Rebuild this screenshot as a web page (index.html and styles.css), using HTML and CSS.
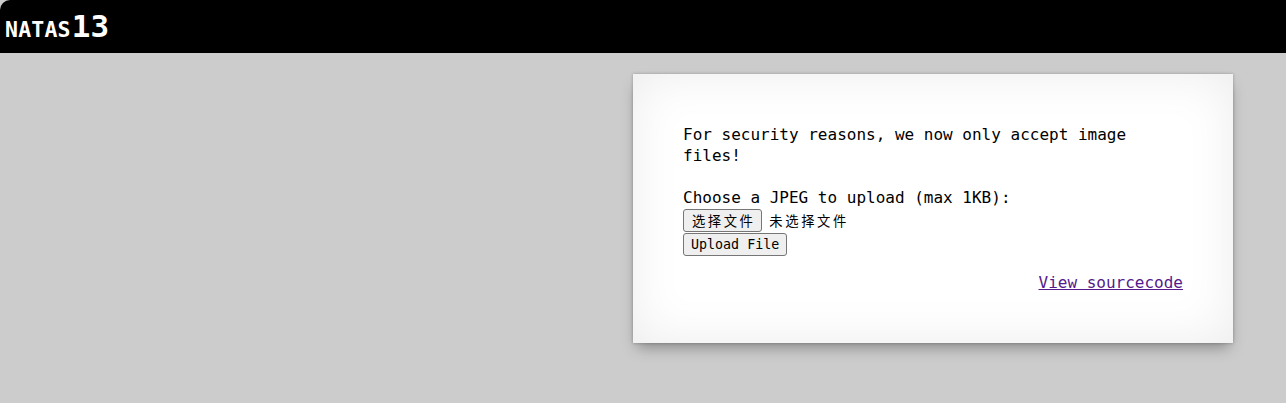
FILE: index.html
```
<!DOCTYPE html>
<html>
<head>
<meta charset="utf-8">
<title>natas13</title>
<link rel="stylesheet" href="styles.css">
</head>
<body>
<h1 class="title"><span class="title-name">NATAS</span><span class="title-level">13</span></h1>
<div class="page">
  <div class="content">
    <form class="upload-form">
      <p class="line">For security reasons, we now only accept image files!</p>
      <p class="line blank">&nbsp;</p>
      <p class="line">Choose a JPEG to upload (max 1KB):</p>
      <div class="file-row">
        <button type="button" class="btn btn-cjk">选择文件</button><span class="file-label">未选择文件</span>
      </div>
      <div class="submit-row">
        <button type="button" class="btn">Upload File</button>
      </div>
    </form>
    <div class="viewsource"><a class="source-link" href="#">View sourcecode</a></div>
  </div>
</div>
</body>
</html>
```

FILE: styles.css
```
html, body {
  margin: 0;
  padding: 0;
}
body {
  background: #cccccc;
  font-family: "DejaVu Sans Mono", "Liberation Mono", "Noto Sans CJK SC", monospace;
  font-size: 16px;
  color: #000;
  width: 1286px;
  height: 403px;
  overflow: hidden;
}
.title {
  margin: 0;
  height: 53px;
  background: #000;
  color: #fff;
  border-top-left-radius: 10px;
  padding: 11px 0 0 5px;
  box-sizing: border-box;
  display: flex;
  align-items: baseline;
  font-weight: bold;
  line-height: 1;
}
.title-name {
  font-size: 21.5px;
  letter-spacing: 0.2px;
}
.title-level {
  font-size: 31px;
  margin-left: 1px;
}
.page {
  display: flex;
  justify-content: flex-end;
  padding: 21px 53px 0 0;
}
.content {
  width: 500px;
  padding: 50px;
  background: #fff;
  box-shadow: inset 0 0 50px rgba(0,0,0,0.08), 0 0 3px rgba(0,0,0,0.25), 0 8px 14px -4px rgba(0,0,0,0.35);
}
.upload-form {
  margin: 0;
}
.line {
  margin: 0;
  line-height: 21px;
}
.file-row {
  display: flex;
  align-items: center;
  height: 24px;
  padding-top: 1px;
  box-sizing: border-box;
}
.btn {
  font-family: "DejaVu Sans Mono", "Liberation Mono", "Noto Sans CJK SC", monospace;
  font-size: 13.33px;
  color: #000;
  background: #efefef;
  border: 1px solid #767676;
  border-radius: 3px;
  padding: 1px 7px;
  height: 23px;
  box-sizing: border-box;
  line-height: 19px;
  margin: 0;
  white-space: nowrap;
}
.btn-cjk {
  font-family: "Noto Sans CJK SC", sans-serif;
  letter-spacing: 2.5px;
  padding: 1px 6px 1px 8px;
}
.file-label {
  font-family: "Noto Sans CJK SC", sans-serif;
  font-size: 13.33px;
  letter-spacing: 2.6px;
  margin-left: 7px;
  white-space: nowrap;
}
.submit-row {
  display: flex;
  height: 25px;
  padding-top: 1px;
  box-sizing: border-box;
}
.viewsource {
  text-align: right;
  margin-top: 15px;
  line-height: 21px;
}
.source-link {
  color: #551a8b;
  text-decoration: underline;
}
```
